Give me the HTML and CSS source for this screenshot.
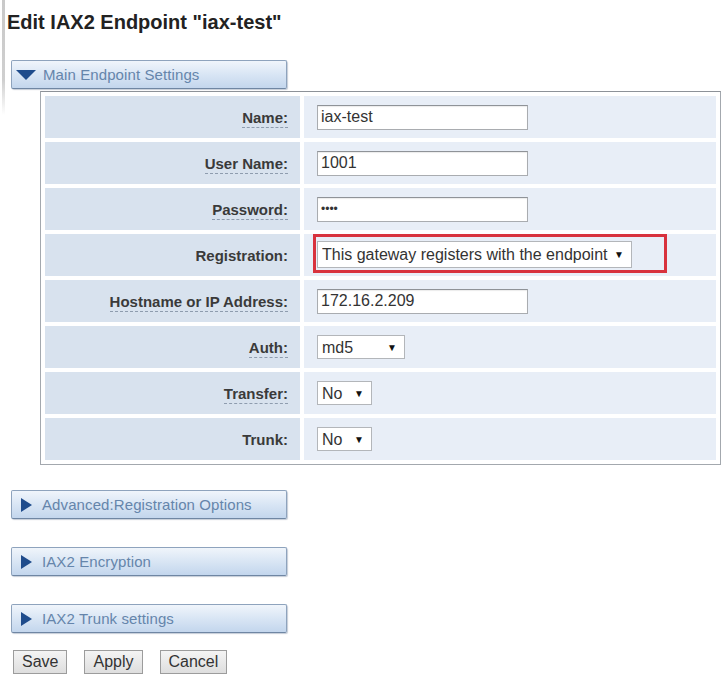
FILE: index.html
```html
<!DOCTYPE html>
<html lang="en">
<head>
<meta charset="utf-8">
<title>Edit IAX2 Endpoint</title>
<link rel="stylesheet" href="styles.css">
</head>
<body>
<div class="page">
  <h1 class="title">Edit IAX2 Endpoint "iax-test"</h1>

  <section class="panel">
    <div class="bar"><span class="tri tri-down"></span><span class="bar-label">Main Endpoint Settings</span></div>
    <table class="form">
      <tr>
        <th><span class="tip">Name:</span></th>
        <td><input class="txt" type="text" value="iax-test"></td>
      </tr>
      <tr>
        <th><span class="tip">User Name:</span></th>
        <td><input class="txt" type="text" value="1001"></td>
      </tr>
      <tr>
        <th><span class="tip">Password:</span></th>
        <td><input class="txt pw" type="password" value="1001"></td>
      </tr>
      <tr>
        <th><span>Registration:</span></th>
        <td>
          <span class="redbox"><span class="sel"><select class="w-reg"><option>This gateway registers with the endpoint</option></select></span></span>
        </td>
      </tr>
      <tr>
        <th><span class="tip">Hostname or IP Address:</span></th>
        <td><input class="txt" type="text" value="172.16.2.209"></td>
      </tr>
      <tr>
        <th><span class="tip">Auth:</span></th>
        <td><span class="sel"><select class="w-auth"><option>md5</option></select></span></td>
      </tr>
      <tr>
        <th><span class="tip">Transfer:</span></th>
        <td><span class="sel"><select class="w-yn"><option>No</option></select></span></td>
      </tr>
      <tr>
        <th><span>Trunk:</span></th>
        <td><span class="sel"><select class="w-yn"><option>No</option></select></span></td>
      </tr>
    </table>
  </section>

  <div class="bar bar-closed"><span class="tri tri-right"></span><span class="bar-label">Advanced:Registration Options</span></div>
  <div class="bar bar-closed"><span class="tri tri-right"></span><span class="bar-label">IAX2 Encryption</span></div>
  <div class="bar bar-closed"><span class="tri tri-right"></span><span class="bar-label">IAX2 Trunk settings</span></div>

  <div class="actions">
    <button class="btn" type="button">Save</button>
    <button class="btn" type="button">Apply</button>
    <button class="btn" type="button">Cancel</button>
  </div>
</div>
</body>
</html>
```

FILE: styles.css
```css
html, body {
  margin: 0;
  padding: 0;
  background: #ffffff;
}

body {
  font-family: "Liberation Sans", Arial, sans-serif;
  color: #333333;
}

.page {
  width: 726px;
  height: 676px;
  box-sizing: border-box;
  padding: 11px 0 0 11px;
  background-image: linear-gradient(to bottom, #c9c9c9 0, #cfcfcf 80px, rgba(255,255,255,0) 115px);
  background-repeat: no-repeat;
  background-size: 3px 115px;
  background-position: 2px 0;
}

.title {
  margin: 0 0 26px -4px;
  font-size: 20px;
  line-height: 23px;
  font-weight: bold;
  color: #222222;
}

/* collapsible section bars */
.bar {
  width: 276px;
  height: 29px;
  box-sizing: border-box;
  display: flex;
  align-items: center;
  border: 1px solid #8ea3bd;
  border-bottom-color: #6f86a3;
  border-radius: 2px;
  background: linear-gradient(to bottom, #f0f5fb 0%, #dbe7f5 45%, #c3d6ed 100%);
  box-shadow: 1px 1px 1px rgba(90, 110, 140, 0.35);
}

.bar-label {
  font-size: 15px;
  color: #6585ab;
  letter-spacing: 0.1px;
}

.bar-closed {
  margin-top: 28px;
}

.panel + .bar-closed {
  margin-top: 25px;
}

.tri {
  display: block;
  width: 0;
  height: 0;
  flex: none;
}

.tri-down {
  margin: 1px 7px 0 4px;
  border-left: 10px solid transparent;
  border-right: 10px solid transparent;
  border-top: 10px solid #1f4c8c;
}

.tri-right {
  margin: 0 10px 0 9px;
  border-top: 7px solid transparent;
  border-bottom: 7px solid transparent;
  border-left: 11px solid #1f4c8c;
}

/* form table */
.form {
  margin: 2px 0 0 29px;
  width: 681px;
  border: 1px solid #a3a8ae;
  border-top-color: #8d9298;
  border-spacing: 4px;
  background: #ffffff;
}

.form th,
.form td {
  height: 42px;
  padding: 0;
  vertical-align: middle;
}

.form th {
  width: 243px;
  padding-right: 12px;
  text-align: right;
  font-size: 15px;
  font-weight: bold;
  color: #3a3a3a;
  background: #d8e2ee;
}

.form td {
  padding-left: 13px;
  background: #e8eef7;
}

.tip {
  border-bottom: 1px dashed #8e9cae;
  padding-bottom: 1px;
}

.txt {
  display: block;
  width: 211px;
  height: 25px;
  box-sizing: border-box;
  margin: 0;
  padding: 0 3px;
  border: 1px solid #a9acb0;
  border-top-color: #8f9398;
  background: #ffffff;
  font-family: "Liberation Sans", Arial, sans-serif;
  font-size: 16px;
  color: #333333;
  box-shadow: inset 0 1px 1px rgba(0, 0, 0, 0.08);
}

.pw {
  font-size: 12px;
  letter-spacing: 0;
}

/* selects */
.sel {
  position: relative;
  display: inline-block;
  vertical-align: middle;
}

.sel::after {
  content: "\25BC";
  position: absolute;
  right: 8px;
  top: 50%;
  transform: translateY(-50%);
  font-size: 10px;
  color: #111111;
  pointer-events: none;
}

.sel select {
  display: block;
  -webkit-appearance: none;
  appearance: none;
  margin: 0;
  height: 24px;
  box-sizing: border-box;
  padding: 0 18px 0 4px;
  border: 1px solid #b3b6ba;
  border-radius: 0;
  background: #ffffff;
  font-family: "Liberation Sans", Arial, sans-serif;
  font-size: 16px;
  color: #333333;
}

.w-reg {
  width: 315px;
  height: 27px !important;
}

.w-auth {
  width: 88px;
}

.w-yn {
  width: 55px;
}

.redbox {
  display: inline-block;
  vertical-align: middle;
  margin: -4px 0 0 -4px;
  padding: 4px 32px 2px 1px;
  border: 3px solid #d8323d;
}

/* buttons */
.actions {
  display: flex;
  gap: 17px;
  margin: 17px 0 0 2px;
}

.btn {
  height: 24px;
  box-sizing: border-box;
  margin: 0;
  padding: 0 8px;
  border: 1px solid #9c9c9c;
  border-radius: 0;
  background: linear-gradient(to bottom, #f4f4f4, #dedede);
  font-family: "Liberation Sans", Arial, sans-serif;
  font-size: 16px;
  color: #333333;
}
```
